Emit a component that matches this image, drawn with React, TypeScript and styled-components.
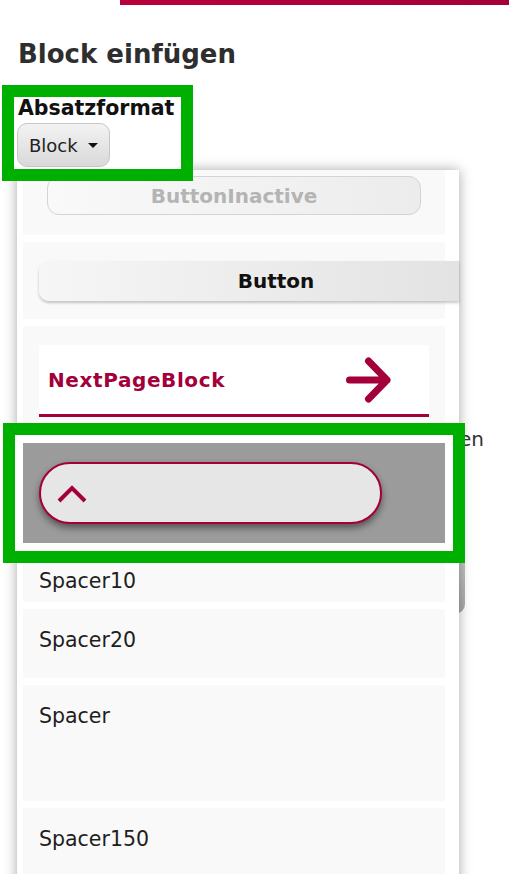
import React from 'react';
import styled, { createGlobalStyle } from 'styled-components';

const GlobalStyle = createGlobalStyle`
  body {
    margin: 0;
    font-family: "DejaVu Sans", "Noto Sans", sans-serif;
    background: #fff;
    color: #222;
  }
`;

const crimson = '#a3003b';

const Page = styled.div`
  position: relative;
  width: 509px;
  height: 874px;
  overflow: hidden;
`;

const TopBar = styled.div`
  height: 5px;
  margin-left: 120px;
  background: linear-gradient(90deg, #b9003b, #a4003a);
`;

const Heading = styled.h1`
  margin: 32px 0 0 18px;
  font-size: 26px;
  line-height: 34px;
  font-weight: 600;
  color: #2e2e2e;
`;

const FormatField = styled.div`
  position: relative;
  z-index: 3;
  width: fit-content;
  margin: 26px 0 0 14px;
  padding: 0 7px 2px 4px;
  background: #fff;
  outline: 12px solid #00b000;
`;

const FieldLabel = styled.div`
  font-size: 20.5px;
  line-height: 22px;
  font-weight: bold;
  color: #111;
`;

const SelectButton = styled.button`
  display: flex;
  align-items: center;
  gap: 10px;
  height: 44px;
  margin: 4px 0 0 -1px;
  padding: 0 11px 0 11px;
  border: 1px solid #c6c6c6;
  border-radius: 10px;
  background: linear-gradient(#f3f3f3, #d9d9d9);
  font-family: inherit;
  font-size: 18px;
  color: #222;
`;

const Caret = styled.span`
  width: 0;
  height: 0;
  border-left: 5px solid transparent;
  border-right: 5px solid transparent;
  border-top: 5px solid #111;
`;

const Intro = styled.p`
  margin: 258px 0 0 18px;
  width: 466px;
  text-align: right;
  font-size: 20px;
  line-height: 24px;
  color: #333;
  white-space: nowrap;
`;

const PageButton = styled.div`
  margin: 83px 0 0 18px;
  width: 447px;
  height: 80px;
  border-radius: 10px;
  background: linear-gradient(#d2d2d2, #a9a9a9);
`;

const Panel = styled.div`
  position: absolute;
  z-index: 2;
  left: 17px;
  top: 170px;
  width: 442px;
  bottom: -400px;
  box-sizing: border-box;
  padding: 0 14px 0 6px;
  display: flex;
  flex-direction: column;
  gap: 7px;
  background: #fff;
  box-shadow: 0 0 12px rgba(0, 0, 0, 0.35);
`;

const Item = styled.div<{ $pad: string }>`
  flex-shrink: 0;
  padding: ${p => p.$pad};
  background: #f9f9f9;
`;

const DraggedItem = styled.div`
  position: relative;
  z-index: 1;
  flex-shrink: 0;
  padding: 19px 16px;
  background: #9b9b9b;
  box-shadow: 0 0 0 8px #fff, 0 0 0 20px #00b000;
`;

const InactiveButton = styled.div`
  height: 37px;
  display: flex;
  align-items: center;
  justify-content: center;
  border: 1px solid #d4d4d4;
  border-radius: 12px;
  background: linear-gradient(90deg, #f9f9f9, #ececec);
  font-size: 20px;
  font-weight: bold;
  color: #b4b4b4;
`;

const WideButton = styled.div`
  width: 420px;
  height: 40px;
  box-sizing: border-box;
  padding-left: 54px;
  display: flex;
  align-items: center;
  justify-content: center;
  border-radius: 10px 0 0 10px;
  background: linear-gradient(90deg, #f6f6f6, #e3e3e3);
  box-shadow: 0 2px 3px rgba(0, 0, 0, 0.22);
  font-size: 20px;
  font-weight: bold;
  color: #111;
`;

const NextPageBox = styled.div`
  height: 72px;
  box-sizing: border-box;
  display: flex;
  align-items: center;
  justify-content: space-between;
  padding: 0 37px 0 9px;
  background: #fff;
  border-bottom: 3px solid ${crimson};
  font-size: 20px;
  letter-spacing: 0.6px;
  font-weight: bold;
  color: ${crimson};
`;

const Pill = styled.div`
  width: 343px;
  height: 62px;
  box-sizing: border-box;
  display: flex;
  align-items: center;
  padding-left: 16px;
  border: 2px solid ${crimson};
  border-radius: 31px;
  background: #e6e6e6;
  box-shadow: 0 4px 7px rgba(0, 0, 0, 0.45);
`;

const SpacerLabel = styled.div`
  font-size: 20.5px;
  line-height: 24px;
  color: #1e1e1e;
`;

const ArrowIcon = () => (
  <svg width="46" height="46" viewBox="0 0 46 46" fill="none" stroke={crimson}
       strokeWidth="7" strokeLinecap="round" strokeLinejoin="round">
    <path d="M3.5 23 H41 M22.5 4 L41 23 L22.5 42"/>
  </svg>
);

const ChevronUp = () => (
  <svg width="30" height="19" viewBox="0 0 30 19" fill="none" stroke={crimson} strokeWidth="4">
    <path d="M2 17 L15 4 L28 17"/>
  </svg>
);

const spacers = [
  { name: 'Spacer10', bottom: 9 },
  { name: 'Spacer20', bottom: 26 },
  { name: 'Spacer', bottom: 73 },
  { name: 'Spacer150', bottom: 150 },
];

export default function App() {
  return (
    <Page>
      <GlobalStyle/>
      <TopBar/>
      <Heading>Block einfügen</Heading>
      <FormatField>
        <FieldLabel>Absatzformat</FieldLabel>
        <SelectButton>Block <Caret/></SelectButton>
      </FormatField>
      <Intro>Block auswählen</Intro>
      <PageButton/>

      <Panel>
        <Item $pad="6px 24px 20px">
          <InactiveButton>ButtonInactive</InactiveButton>
        </Item>
        <Item $pad="19px 0 18px 16px">
          <WideButton>Button</WideButton>
        </Item>
        <Item $pad="19px 16px">
          <NextPageBox>
            NextPageBlock
            <ArrowIcon/>
          </NextPageBox>
        </Item>
        <DraggedItem>
          <Pill><ChevronUp/></Pill>
        </DraggedItem>
        {spacers.map(s => (
          <Item key={s.name} $pad={`19px 16px ${s.bottom}px`}>
            <SpacerLabel>{s.name}</SpacerLabel>
          </Item>
        ))}
      </Panel>
    </Page>
  );
}
